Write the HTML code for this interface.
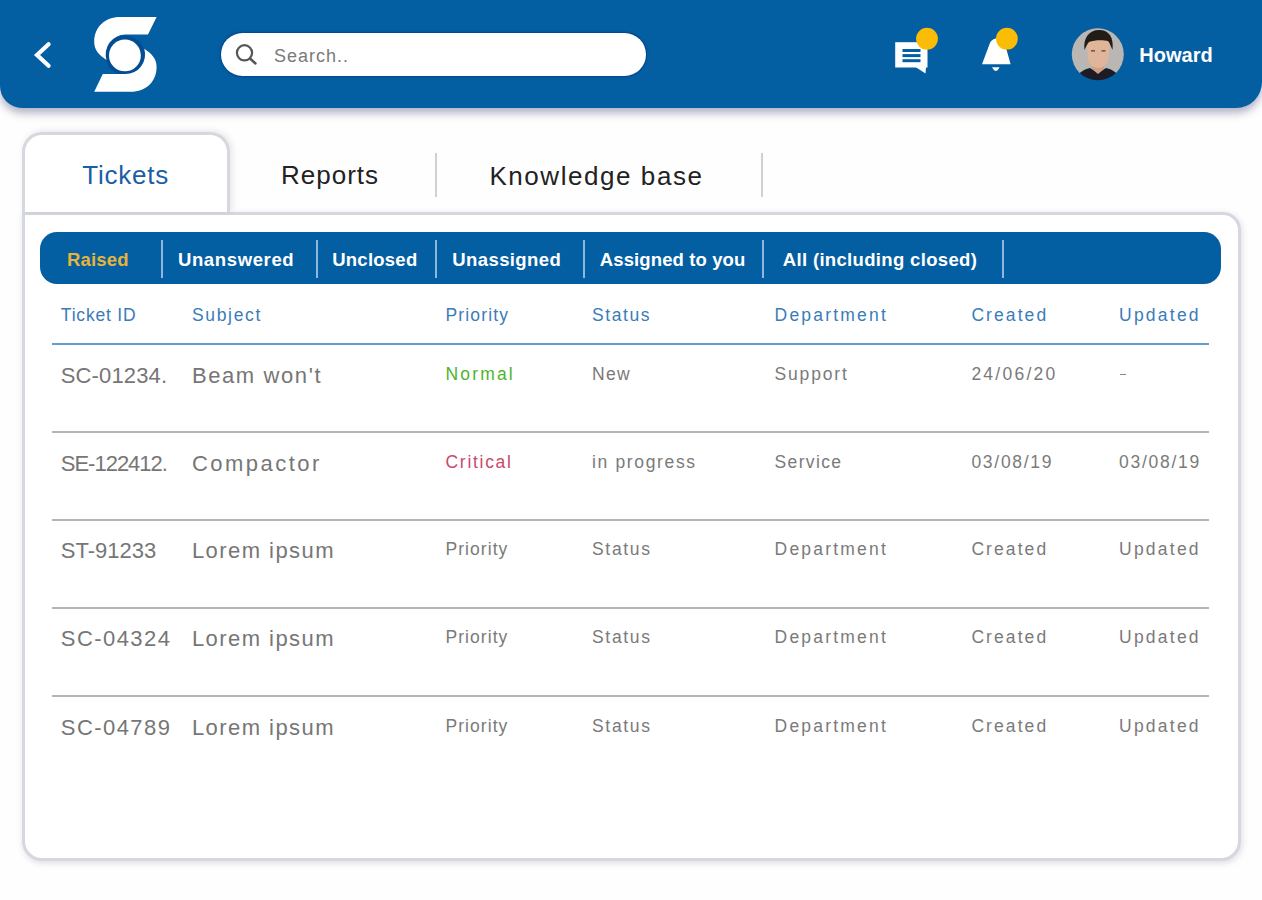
<!DOCTYPE html>
<html><head><meta charset="utf-8">
<style>
html,body{margin:0;padding:0;}
body{width:1262px;height:900px;overflow:hidden;background:#fefefe;position:relative;font-family:"Liberation Sans",sans-serif;}
.t{position:absolute;white-space:nowrap;line-height:1em;}
#hdr{position:absolute;left:0;top:0;width:1262px;height:108px;background:#045ea2;border-radius:0 0 26px 22px;box-shadow:0 5px 9px rgba(70,70,120,0.42);}
#search{position:absolute;left:221px;top:33px;width:425px;height:43px;border-radius:22px;background:#fff;box-shadow:0 0 1.5px 1.2px rgba(0,55,125,0.55);}
#panel{position:absolute;left:21.5px;top:211.5px;width:1213px;height:643px;border:3px solid #d5d8df;border-radius:0 18px 20px 20px;background:#fff;box-shadow:1px 2px 6px rgba(100,100,140,0.22);box-sizing:content-box;}
#tab{position:absolute;left:21.5px;top:131.5px;width:202px;height:77px;border:3px solid #d6d8de;border-bottom:none;border-radius:20px 20px 0 0;background:#fff;box-shadow:2px -1px 6px rgba(110,110,150,0.18);}
#tabcover{position:absolute;left:25px;top:200px;width:204px;height:12px;background:#fff;}
.sep{position:absolute;width:2px;background:#cfd0d4;}
#fbar{position:absolute;left:40px;top:232px;width:1181px;height:52px;border-radius:17px;background:#045ea2;}
.fsep{position:absolute;top:240px;height:38px;width:2px;background:#8fb6dc;}
#hline{position:absolute;left:52px;top:343.4px;width:1157px;height:2px;background:#63a0d0;}
.rl{position:absolute;left:52px;width:1157px;height:2.2px;background:#b4b4b4;}
</style></head><body>
<div id="hdr"></div>
<svg style="position:absolute;left:0;top:0" width="1262" height="110">
 <polyline points="48.6,44.2 37,55 48.6,65.8" fill="none" stroke="#fff" stroke-width="4.2" stroke-linecap="round"/>
 <circle cx="125" cy="55.2" r="17.8" fill="none" stroke="#044c93" stroke-width="4"/>
 <path d="M156.6,17 L148,34.6 L125.4,34.6 A19.75,19.75 0 0 0 106.5,60 C99,55 94.2,50 94.2,42 C94.2,27 105,17 120,17 Z" fill="#fff"/>
 <path d="M156.6,17 L148,34.6 L125.4,34.6 A19.75,19.75 0 0 0 106.5,60 C99,55 94.2,50 94.2,42 C94.2,27 105,17 120,17 Z" fill="#fff" transform="rotate(180 125.4 54.35)"/>
 <circle cx="124.9" cy="55.4" r="15.9" fill="#fff"/>
</svg>
<div id="search"></div>
<svg style="position:absolute;left:0;top:0" width="1262" height="110">
 <circle cx="244.5" cy="52.8" r="7.6" fill="none" stroke="#555" stroke-width="2.2"/>
 <line x1="250" y1="58.5" x2="255.5" y2="63.5" stroke="#555" stroke-width="2.4" stroke-linecap="round"/>
 <!-- chat -->
 <rect x="895.2" y="42.2" width="32.3" height="25.3" fill="#fff"/>
 <polygon points="915.5,67 926,67 925.5,73.5" fill="#fff"/>
 <rect x="902.5" y="49" width="18" height="3" fill="#045ea2"/>
 <rect x="902.5" y="54.1" width="18" height="3" fill="#045ea2"/>
 <rect x="902.5" y="59.2" width="18" height="3" fill="#045ea2"/>
 <circle cx="927" cy="38.7" r="10.9" fill="#fbbc05"/>
 <!-- bell -->
 <path d="M982,64.2 L1010.6,64.2 L1005.8,47 C1004.5,41.5 1001.5,38.5 997,38.5 C993,38.5 990.5,41 989.4,44.5 Z" fill="#fff"/>
 <path d="M992,67.2 L999.6,67.2 L997.6,70.2 L995.8,71 L994,70.2 Z" fill="#fff"/>
 <circle cx="1006.9" cy="38.7" r="10.9" fill="#fbbc05"/>
 <!-- avatar -->
 <defs><clipPath id="av"><circle cx="1097.8" cy="54.3" r="26"/></clipPath>
 <filter id="bl"><feGaussianBlur stdDeviation="0.5"/></filter></defs><g clip-path="url(#av)"><g filter="url(#bl)">
  <rect x="1070" y="26" width="56" height="56" fill="#b9b6b3"/>
  <path d="M1074,84 C1076,74 1082,70 1090,68 L1098,73 L1106,68 C1114,70 1120,74 1122,84 Z" fill="#1c1f26"/>
  <path d="M1092,62 L1104,62 L1104,69 L1098,74 L1092,69 Z" fill="#d0a080"/>
  <path d="M1087,46 C1087,40 1091,37 1098,37 C1105,37 1109.5,40 1109.5,46 L1109,56 C1108,64 1103,68 1098,68 C1093,68 1088,64 1087.5,56 Z" fill="#e0b59a"/>
  <path d="M1084.5,50 C1083,38 1089,30 1099,30 C1109,30 1114,37 1112.5,50 C1111,47 1110,43 1108,41 C1103,40 1094,40 1089,42 C1087,44 1086,47 1084.5,50 Z" fill="#231c19"/>
  <rect x="1091" y="50" width="4" height="1.6" fill="#7a5646"/>
  <rect x="1101.5" y="50" width="4" height="1.6" fill="#7a5646"/>
 </g></g>
</svg>
<div id="panel"></div>
<div id="tab"></div>
<div class="sep" style="left:434.5px;top:153px;height:44px"></div>
<div class="sep" style="left:761.3px;top:153px;height:44px"></div>
<div id="fbar"></div>
<div class="fsep" style="left:160.7px"></div>
<div class="fsep" style="left:316.3px"></div>
<div class="fsep" style="left:435.2px"></div>
<div class="fsep" style="left:582.6px"></div>
<div class="fsep" style="left:761.9px"></div>
<div class="fsep" style="left:1002px"></div>
<div id="hline"></div>
<div class="rl" style="top:431.1px"></div><div class="rl" style="top:518.6px"></div><div class="rl" style="top:606.5px"></div><div class="rl" style="top:694.8px"></div>
<div class="t" style="left:1139.20px;top:45.47px;font-size:20px;letter-spacing:0.06px;color:#fff;font-weight:bold;">Howard</div>
<div class="t" style="left:274.00px;top:47.16px;font-size:18px;letter-spacing:0.99px;color:#7a7a7a;">Search..</div>
<div class="t" style="left:82.20px;top:162.19px;font-size:26px;letter-spacing:0.80px;color:#1a5ea6;">Tickets</div>
<div class="t" style="left:281.00px;top:162.19px;font-size:26px;letter-spacing:1.00px;color:#222;">Reports</div>
<div class="t" style="left:489.40px;top:162.99px;font-size:26px;letter-spacing:1.56px;color:#222;">Knowledge base</div>
<div class="t" style="left:67.10px;top:250.94px;font-size:18.5px;letter-spacing:0.16px;color:#e5b43a;font-weight:bold;">Raised</div>
<div class="t" style="left:177.90px;top:250.94px;font-size:18.5px;letter-spacing:0.64px;color:#fff;font-weight:bold;">Unanswered</div>
<div class="t" style="left:332.20px;top:250.94px;font-size:18.5px;letter-spacing:0.25px;color:#fff;font-weight:bold;">Unclosed</div>
<div class="t" style="left:452.30px;top:250.94px;font-size:18.5px;letter-spacing:0.40px;color:#fff;font-weight:bold;">Unassigned</div>
<div class="t" style="left:599.80px;top:250.94px;font-size:18.5px;letter-spacing:0.11px;color:#fff;font-weight:bold;">Assigned to you</div>
<div class="t" style="left:782.80px;top:250.94px;font-size:18.5px;letter-spacing:0.33px;color:#fff;font-weight:bold;">All (including closed)</div>
<div class="t" style="left:60.80px;top:307.09px;font-size:17.5px;letter-spacing:0.80px;color:#3a7cb8;">Ticket ID</div>
<div class="t" style="left:191.90px;top:307.09px;font-size:17.5px;letter-spacing:1.69px;color:#3a7cb8;">Subject</div>
<div class="t" style="left:445.50px;top:307.09px;font-size:17.5px;letter-spacing:1.15px;color:#3a7cb8;">Priority</div>
<div class="t" style="left:592.00px;top:307.09px;font-size:17.5px;letter-spacing:1.58px;color:#3a7cb8;">Status</div>
<div class="t" style="left:774.60px;top:307.09px;font-size:17.5px;letter-spacing:2.20px;color:#3a7cb8;">Department</div>
<div class="t" style="left:971.40px;top:307.09px;font-size:17.5px;letter-spacing:2.08px;color:#3a7cb8;">Created</div>
<div class="t" style="left:1119.00px;top:307.09px;font-size:17.5px;letter-spacing:2.24px;color:#3a7cb8;">Updated</div>
<div class="t" style="left:60.80px;top:365.08px;font-size:22px;letter-spacing:0.13px;color:#767676;">SC-01234.</div>
<div class="t" style="left:191.90px;top:365.08px;font-size:22px;letter-spacing:1.60px;color:#767676;">Beam won't</div>
<div class="t" style="left:445.50px;top:366.19px;font-size:17.5px;letter-spacing:2.17px;color:#4cb52a;">Normal</div>
<div class="t" style="left:592.00px;top:366.19px;font-size:17.5px;letter-spacing:1.31px;color:#7a7a7a;">New</div>
<div class="t" style="left:774.60px;top:366.19px;font-size:17.5px;letter-spacing:1.81px;color:#7a7a7a;">Support</div>
<div class="t" style="left:971.40px;top:366.19px;font-size:17.5px;letter-spacing:2.25px;color:#7a7a7a;">24/06/20</div>
<div style="position:absolute;left:1120px;top:373.5px;width:6px;height:1.5px;background:#888"></div>
<div class="t" style="left:60.80px;top:452.88px;font-size:22px;letter-spacing:-1.01px;color:#767676;">SE-122412.</div>
<div class="t" style="left:191.90px;top:452.88px;font-size:22px;letter-spacing:2.48px;color:#767676;">Compactor</div>
<div class="t" style="left:445.50px;top:453.99px;font-size:17.5px;letter-spacing:1.71px;color:#c9496c;">Critical</div>
<div class="t" style="left:592.00px;top:453.99px;font-size:17.5px;letter-spacing:1.65px;color:#7a7a7a;">in progress</div>
<div class="t" style="left:774.60px;top:453.99px;font-size:17.5px;letter-spacing:1.34px;color:#7a7a7a;">Service</div>
<div class="t" style="left:971.40px;top:453.99px;font-size:17.5px;letter-spacing:1.72px;color:#7a7a7a;">03/08/19</div>
<div class="t" style="left:1119.00px;top:453.99px;font-size:17.5px;letter-spacing:1.73px;color:#7a7a7a;">03/08/19</div>
<div class="t" style="left:60.80px;top:540.38px;font-size:22px;letter-spacing:-0.01px;color:#767676;">ST-91233</div>
<div class="t" style="left:191.90px;top:540.38px;font-size:22px;letter-spacing:1.45px;color:#767676;">Lorem ipsum</div>
<div class="t" style="left:445.50px;top:541.49px;font-size:17.5px;letter-spacing:1.05px;color:#7a7a7a;">Priority</div>
<div class="t" style="left:592.00px;top:541.49px;font-size:17.5px;letter-spacing:1.68px;color:#7a7a7a;">Status</div>
<div class="t" style="left:774.60px;top:541.49px;font-size:17.5px;letter-spacing:2.20px;color:#7a7a7a;">Department</div>
<div class="t" style="left:971.40px;top:541.49px;font-size:17.5px;letter-spacing:2.08px;color:#7a7a7a;">Created</div>
<div class="t" style="left:1119.00px;top:541.49px;font-size:17.5px;letter-spacing:2.24px;color:#7a7a7a;">Updated</div>
<div class="t" style="left:60.80px;top:628.28px;font-size:22px;letter-spacing:1.44px;color:#767676;">SC-04324</div>
<div class="t" style="left:191.90px;top:628.28px;font-size:22px;letter-spacing:1.45px;color:#767676;">Lorem ipsum</div>
<div class="t" style="left:445.50px;top:629.39px;font-size:17.5px;letter-spacing:1.05px;color:#7a7a7a;">Priority</div>
<div class="t" style="left:592.00px;top:629.39px;font-size:17.5px;letter-spacing:1.68px;color:#7a7a7a;">Status</div>
<div class="t" style="left:774.60px;top:629.39px;font-size:17.5px;letter-spacing:2.20px;color:#7a7a7a;">Department</div>
<div class="t" style="left:971.40px;top:629.39px;font-size:17.5px;letter-spacing:2.08px;color:#7a7a7a;">Created</div>
<div class="t" style="left:1119.00px;top:629.39px;font-size:17.5px;letter-spacing:2.24px;color:#7a7a7a;">Updated</div>
<div class="t" style="left:60.80px;top:716.58px;font-size:22px;letter-spacing:1.44px;color:#767676;">SC-04789</div>
<div class="t" style="left:191.90px;top:716.58px;font-size:22px;letter-spacing:1.45px;color:#767676;">Lorem ipsum</div>
<div class="t" style="left:445.50px;top:717.69px;font-size:17.5px;letter-spacing:1.05px;color:#7a7a7a;">Priority</div>
<div class="t" style="left:592.00px;top:717.69px;font-size:17.5px;letter-spacing:1.68px;color:#7a7a7a;">Status</div>
<div class="t" style="left:774.60px;top:717.69px;font-size:17.5px;letter-spacing:2.20px;color:#7a7a7a;">Department</div>
<div class="t" style="left:971.40px;top:717.69px;font-size:17.5px;letter-spacing:2.08px;color:#7a7a7a;">Created</div>
<div class="t" style="left:1119.00px;top:717.69px;font-size:17.5px;letter-spacing:2.24px;color:#7a7a7a;">Updated</div>
</body></html>
